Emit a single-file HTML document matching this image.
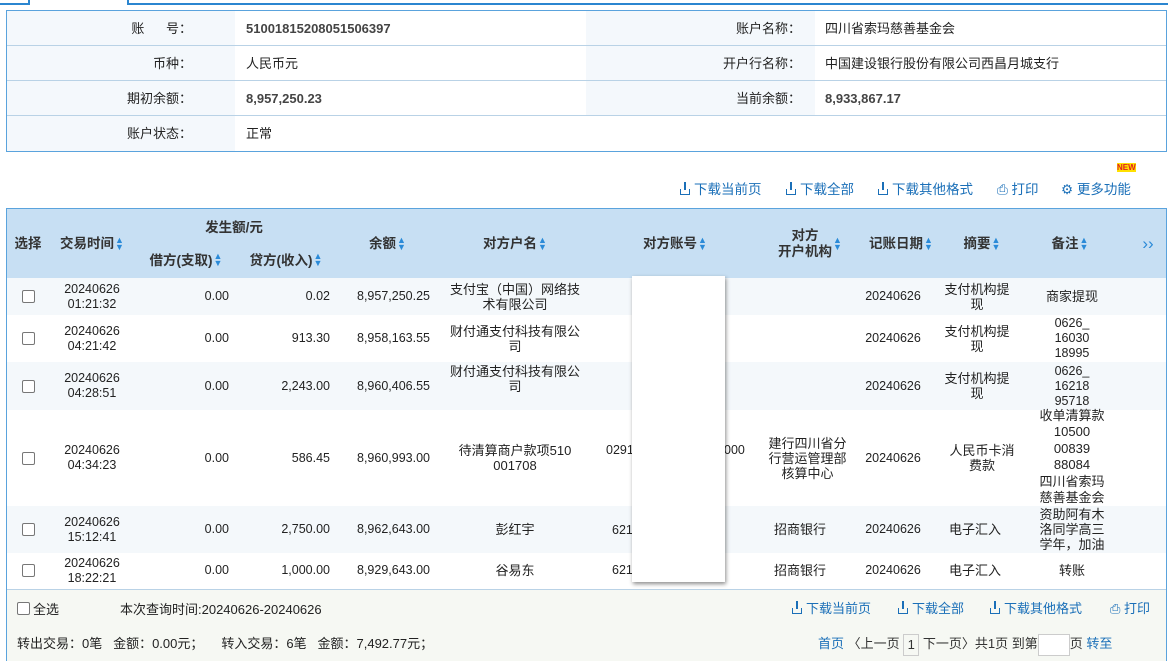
<!DOCTYPE html>
<html><head><meta charset="utf-8"><style>
body{margin:0;width:1168px;height:666px;background:#fff;position:relative;overflow:hidden;font-family:"Liberation Sans","Noto Sans CJK SC",sans-serif;font-size:13px;color:#222}
.a{position:absolute}
.c{position:absolute;display:flex;align-items:center;justify-content:center;text-align:center;line-height:15px}
.l{justify-content:flex-start}
.r{justify-content:flex-end}
.n{font-size:12.5px}
.lk{color:#1a6fb8;position:absolute;font-size:13.5px}
.s{color:#2a8ad8;font-size:9px;margin-left:1px;line-height:7px;display:inline-block;vertical-align:middle}
.cb{width:11px;height:11px;border:1px solid #777;border-radius:2px;background:#fff}
.h{font-weight:bold;color:#333;font-size:13.5px}
.dl{display:inline-block;width:8px;height:5px;border:1.5px solid #1a6fb8;border-top:none;position:relative;margin-right:4px;vertical-align:-1px}
.dl:before{content:"";position:absolute;left:3px;top:-7px;width:1.5px;height:8px;background:#1a6fb8}
</style></head><body>
<div class="a" style="left:0;top:0;width:28px;height:3px;border-right:2px solid #2b86d0;border-bottom:2px solid #2b86d0"></div>
<div class="a" style="left:127px;top:0;width:1040px;height:3px;border-left:2px solid #2b86d0;border-bottom:2px solid #2b86d0"></div>
<div class="a" style="left:6px;top:10px;width:1159px;height:140px;border:1px solid #5aa3dd;background:#fff"></div>
<div class="a" style="left:7px;top:11px;width:228px;height:140px;background:#f4f8fc"></div>
<div class="a" style="left:586px;top:11px;width:229px;height:105px;background:#f4f8fc"></div>
<div class="a" style="left:7px;top:45px;width:1159px;height:1px;background:#b9d2e6"></div>
<div class="a" style="left:7px;top:80px;width:1159px;height:1px;background:#b9d2e6"></div>
<div class="a" style="left:7px;top:115px;width:1159px;height:1px;background:#b9d2e6"></div>
<div class="c r" style="left:7px;top:11px;width:185px;height:35px">账&nbsp;&nbsp;&nbsp;&nbsp;&nbsp;&nbsp;号：</div>
<div class="c r" style="left:7px;top:46px;width:185px;height:35px">币种：</div>
<div class="c r" style="left:7px;top:81px;width:185px;height:35px">期初余额：</div>
<div class="c r" style="left:7px;top:116px;width:185px;height:35px">账户状态：</div>
<div class="c l" style="left:246px;top:11px;height:35px;font-weight:bold;color:#444">51001815208051506397</div>
<div class="c l" style="left:246px;top:46px;height:35px">人民币元</div>
<div class="c l" style="left:246px;top:81px;height:35px;font-weight:bold;color:#444">8,957,250.23</div>
<div class="c l" style="left:246px;top:116px;height:35px">正常</div>
<div class="c r" style="left:586px;top:11px;width:215px;height:35px">账户名称：</div>
<div class="c r" style="left:586px;top:46px;width:215px;height:35px">开户行名称：</div>
<div class="c r" style="left:586px;top:81px;width:215px;height:35px">当前余额：</div>
<div class="c l" style="left:825px;top:11px;height:35px">四川省索玛慈善基金会</div>
<div class="c l" style="left:825px;top:46px;height:35px">中国建设银行股份有限公司西昌月城支行</div>
<div class="c l" style="left:825px;top:81px;height:35px;font-weight:bold;color:#444">8,933,867.17</div>
<div class="a" style="left:1117px;top:163px;font-size:8px;font-weight:bold;color:#e02020;background:#ffe000;line-height:9px">NEW</div>
<div class="lk" style="left:680px;top:178px"><span class="dl"></span>下载当前页</div>
<div class="lk" style="left:786px;top:178px"><span class="dl"></span>下载全部</div>
<div class="lk" style="left:878px;top:178px"><span class="dl"></span>下载其他格式</div>
<div class="lk" style="left:997px;top:178px">⎙ 打印</div>
<div class="lk" style="left:1061px;top:178px">⚙ 更多功能</div>
<div class="a" style="left:6px;top:208px;width:1159px;height:451px;border:1px solid #5aa3dd"></div>
<div class="a" style="left:7px;top:209px;width:1159px;height:69px;background:#c7dff3"></div>
<div class="c h" style="left:7px;top:209px;width:42px;height:69px">选择</div>
<div class="c h" style="left:50px;top:209px;width:84px;height:69px">交易时间<span class="s">▲<br>▼</span></div>
<div class="c h" style="left:134px;top:213px;width:200px;height:28px">发生额/元</div>
<div class="c h" style="left:136px;top:246px;width:100px;height:28px">借方(支取)<span class="s">▲<br>▼</span></div>
<div class="c h" style="left:236px;top:246px;width:100px;height:28px">贷方(收入)<span class="s">▲<br>▼</span></div>
<div class="c h" style="left:340px;top:209px;width:95px;height:69px">余额<span class="s">▲<br>▼</span></div>
<div class="c h" style="left:440px;top:209px;width:150px;height:69px">对方户名<span class="s">▲<br>▼</span></div>
<div class="c h" style="left:600px;top:209px;width:150px;height:69px">对方账号<span class="s">▲<br>▼</span></div>
<div class="c h" style="left:760px;top:209px;width:100px;height:69px;line-height:16px">对方<br>开户机构<span class="s">▲<br>▼</span></div>
<div class="c h" style="left:860px;top:209px;width:82px;height:69px">记账日期<span class="s">▲<br>▼</span></div>
<div class="c h" style="left:942px;top:209px;width:80px;height:69px">摘要<span class="s">▲<br>▼</span></div>
<div class="c h" style="left:1030px;top:209px;width:80px;height:69px">备注<span class="s">▲<br>▼</span></div>
<div class="c" style="left:1130px;top:209px;width:36px;height:69px;color:#2a8ad8;font-size:17px">››</div>
<div class="a" style="left:7px;top:278px;width:1159px;height:37px;background:#f4f8fb"></div>
<div class="a" style="left:7px;top:362px;width:1159px;height:48px;background:#f4f8fb"></div>
<div class="a" style="left:7px;top:506px;width:1159px;height:47px;background:#f4f8fb"></div>

<div class="c" style="left:7px;top:278px;width:42px;height:37px"><div class="cb"></div></div>
<div class="c n" style="left:50px;top:278px;width:84px;height:37px">20240626<br>01:21:32</div>
<div class="c r n" style="left:134px;top:278px;width:95px;height:37px">0.00</div>
<div class="c r n" style="left:234px;top:278px;width:96px;height:37px">0.02</div>
<div class="c r n" style="left:335px;top:278px;width:95px;height:37px">8,957,250.25</div>
<div class="c" style="left:440px;top:278px;width:150px;height:37px">支付宝（中国）网络技<br>术有限公司</div>
<div class="c n" style="left:860px;top:278px;width:66px;height:37px">20240626</div>
<div class="c" style="left:942px;top:278px;width:70px;height:37px">支付机构提<br>现</div>
<div class="c" style="left:1030px;top:278px;width:84px;height:37px">商家提现</div>

<div class="c" style="left:7px;top:315px;width:42px;height:47px"><div class="cb"></div></div>
<div class="c n" style="left:50px;top:315px;width:84px;height:47px">20240626<br>04:21:42</div>
<div class="c r n" style="left:134px;top:315px;width:95px;height:47px">0.00</div>
<div class="c r n" style="left:234px;top:315px;width:96px;height:47px">913.30</div>
<div class="c r n" style="left:335px;top:315px;width:95px;height:47px">8,958,163.55</div>
<div class="c" style="left:440px;top:315px;width:150px;height:47px">财付通支付科技有限公<br>司</div>
<div class="c n" style="left:860px;top:315px;width:66px;height:47px">20240626</div>
<div class="c" style="left:942px;top:315px;width:70px;height:47px">支付机构提<br>现</div>
<div class="c n" style="left:1030px;top:315px;width:84px;height:47px">0626_<br>16030<br>18995</div>

<div class="c" style="left:7px;top:362px;width:42px;height:48px"><div class="cb"></div></div>
<div class="c n" style="left:50px;top:362px;width:84px;height:48px">20240626<br>04:28:51</div>
<div class="c r n" style="left:134px;top:362px;width:95px;height:48px">0.00</div>
<div class="c r n" style="left:234px;top:362px;width:96px;height:48px">2,243.00</div>
<div class="c r n" style="left:335px;top:362px;width:95px;height:48px">8,960,406.55</div>
<div class="c" style="left:440px;top:355px;width:150px;height:48px">财付通支付科技有限公<br>司</div>
<div class="c n" style="left:860px;top:362px;width:66px;height:48px">20240626</div>
<div class="c" style="left:942px;top:362px;width:70px;height:48px">支付机构提<br>现</div>
<div class="c n" style="left:1030px;top:362px;width:84px;height:48px">0626_<br>16218<br>95718</div>

<div class="c" style="left:7px;top:410px;width:42px;height:96px"><div class="cb"></div></div>
<div class="c n" style="left:50px;top:410px;width:84px;height:96px">20240626<br>04:34:23</div>
<div class="c r n" style="left:134px;top:410px;width:95px;height:96px">0.00</div>
<div class="c r n" style="left:234px;top:410px;width:96px;height:96px">586.45</div>
<div class="c r n" style="left:335px;top:410px;width:95px;height:96px">8,960,993.00</div>
<div class="c" style="left:440px;top:410px;width:150px;height:96px">待清算商户款项510<br>001708</div>
<div class="a n" style="left:606px;top:443px">0291</div>
<div class="a n" style="left:724px;top:443px">000</div>
<div class="c" style="left:760px;top:410px;width:95px;height:96px">建行四川省分<br>行营运管理部<br>核算中心</div>
<div class="c n" style="left:860px;top:410px;width:66px;height:96px">20240626</div>
<div class="c" style="left:942px;top:410px;width:80px;height:96px">人民币卡消<br>费款</div>
<div class="c" style="left:1030px;top:408px;width:84px;height:98px;line-height:16.5px">收单清算款<br>10500<br>00839<br>88084<br>四川省索玛<br>慈善基金会</div>

<div class="c" style="left:7px;top:506px;width:42px;height:47px"><div class="cb"></div></div>
<div class="c n" style="left:50px;top:506px;width:84px;height:47px">20240626<br>15:12:41</div>
<div class="c r n" style="left:134px;top:506px;width:95px;height:47px">0.00</div>
<div class="c r n" style="left:234px;top:506px;width:96px;height:47px">2,750.00</div>
<div class="c r n" style="left:335px;top:506px;width:95px;height:47px">8,962,643.00</div>
<div class="c" style="left:440px;top:506px;width:150px;height:47px">彭红宇</div>
<div class="a n" style="left:612px;top:523px">621</div>
<div class="c" style="left:760px;top:506px;width:80px;height:47px">招商银行</div>
<div class="c n" style="left:860px;top:506px;width:66px;height:47px">20240626</div>
<div class="c" style="left:942px;top:506px;width:66px;height:47px">电子汇入</div>
<div class="c" style="left:1030px;top:504px;width:84px;height:51px">资助阿有木<br>洛同学高三<br>学年，加油</div>

<div class="c" style="left:7px;top:553px;width:42px;height:35px"><div class="cb"></div></div>
<div class="c n" style="left:50px;top:553px;width:84px;height:35px">20240626<br>18:22:21</div>
<div class="c r n" style="left:134px;top:553px;width:95px;height:35px">0.00</div>
<div class="c r n" style="left:234px;top:553px;width:96px;height:35px">1,000.00</div>
<div class="c r n" style="left:335px;top:553px;width:95px;height:35px">8,929,643.00</div>
<div class="c" style="left:440px;top:553px;width:150px;height:35px">谷易东</div>
<div class="a n" style="left:612px;top:563px">621</div>
<div class="c" style="left:760px;top:553px;width:80px;height:35px">招商银行</div>
<div class="c n" style="left:860px;top:553px;width:66px;height:35px">20240626</div>
<div class="c" style="left:942px;top:553px;width:66px;height:35px">电子汇入</div>
<div class="c" style="left:1030px;top:553px;width:84px;height:35px">转账</div>
<div class="a" style="left:632px;top:276px;width:93px;height:306px;background:#fff;box-shadow:1px 2px 4px rgba(0,0,0,.45)"></div>
<div class="a" style="left:7px;top:589px;width:1159px;height:71px;background:#f6f8f3;border-top:1px solid #b9d2e6"></div>
<div class="a" style="left:17px;top:599px;display:flex;align-items:center"><div class="cb" style="margin-right:3px"></div>全选</div>
<div class="a" style="left:120px;top:599px">本次查询时间:20240626-20240626</div>
<div class="lk" style="left:792px;top:598px;font-size:13px"><span class="dl"></span>下载当前页</div>
<div class="lk" style="left:898px;top:598px;font-size:13px"><span class="dl"></span>下载全部</div>
<div class="lk" style="left:990px;top:598px;font-size:13px"><span class="dl"></span>下载其他格式</div>
<div class="lk" style="left:1110px;top:598px;font-size:13px">⎙ 打印</div>
<div class="a" style="left:17px;top:633px">转出交易：0笔&nbsp;&nbsp;&nbsp;金额：0.00元；&nbsp;&nbsp;&nbsp;&nbsp;&nbsp;转入交易：6笔&nbsp;&nbsp;&nbsp;金额：7,492.77元；</div>
<div class="a" style="left:818px;top:633px;color:#333"><span style="color:#1a6fb8">首页</span> 〈上一页 <span style="display:inline-block;width:14px;height:20px;border:1px solid #ccc;text-align:center;line-height:20px;vertical-align:middle">1</span> 下一页〉共1页 到第<span style="display:inline-block;width:30px;height:20px;border:1px solid #ccc;background:#fff;vertical-align:middle"></span>页 <span style="color:#1a6fb8">转至</span></div>
</body></html>
